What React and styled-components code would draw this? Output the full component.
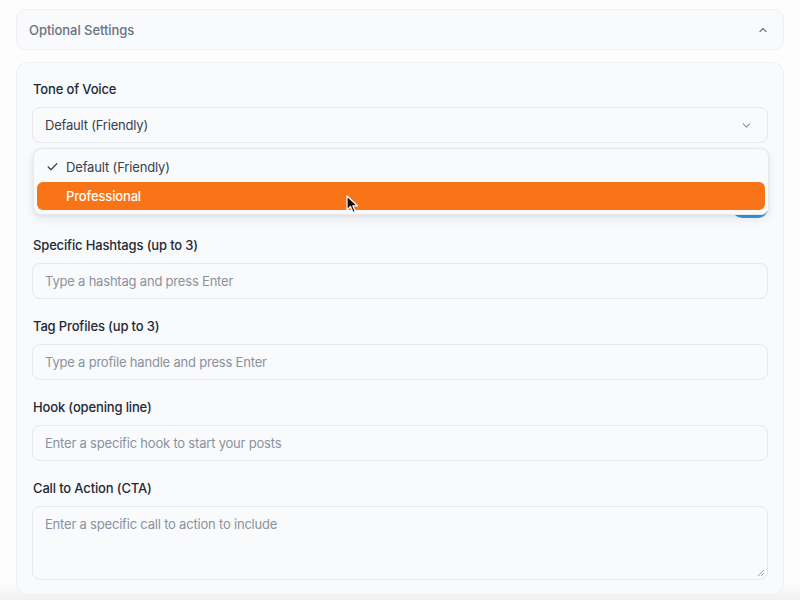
import React from "react";
import styled, { createGlobalStyle } from "styled-components";

const Global = createGlobalStyle`
  html, body { margin: 0; padding: 0; background: #fdfdfd; }
  body { font-family: Inter, "Noto Sans", sans-serif; -webkit-font-smoothing: antialiased; }
  * { box-sizing: border-box; }
`;

const Page = styled.div`
  width: 800px;
  height: 600px;
  padding: 9px 16px 0;
  display: flex;
  flex-direction: column;
  gap: 12px;
  overflow: hidden;
  position: relative;
  background: linear-gradient(to bottom, #fdfdfd 0%, #fdfdfd 97%, #f1f1f2 100%);
`;

const Header = styled.div`
  height: 41px;
  border: 1px solid #eef0f3;
  border-radius: 10px;
  background: #f8fafc;
  display: flex;
  align-items: center;
  justify-content: space-between;
  padding: 0 14px 0 12px;
  font-size: 13px;
  font-weight: 500;
  color: #6b7280;
  letter-spacing: -0.05px;
`;

const Card = styled.div`
  border: 1px solid #eceff3;
  border-radius: 12px;
  background: #f8fafc;
  padding: 16px 15px 14px;
  display: flex;
  flex-direction: column;
  gap: 17px;
`;

const Field = styled.div`
  display: flex;
  flex-direction: column;
  gap: 8px;
  position: relative;
`;

const Label = styled.div`
  font-size: 13px;
  line-height: 20px;
  font-weight: 500;
  color: #1f2937;
  padding-left: 1px;
  letter-spacing: -0.15px;
`;

const Box = styled.div`
  height: ${(p) => (p.$tall ? "74px" : "36px")};
  border: 1px solid #e5e8ed;
  border-radius: 8px;
  background: #f8fafc;
  display: flex;
  align-items: ${(p) => (p.$tall ? "flex-start" : "center")};
  justify-content: space-between;
  padding: ${(p) => (p.$tall ? "9px 12px" : "0 14px 0 12px")};
  font-size: 13px;
  letter-spacing: -0.2px;
  color: ${(p) => (p.$placeholder ? "#8b929c" : "#374151")};
  position: relative;
`;

const Resize = styled.svg`
  position: absolute;
  right: 2px;
  bottom: 2px;
`;

const HiddenRow = styled.div`
  height: 58px;
  display: flex;
  align-items: flex-end;
  justify-content: flex-end;
`;

const Toggle = styled.div`
  width: 36px;
  height: 20px;
  border-radius: 10px;
  background: #3b95e0;
`;

const Menu = styled.div`
  position: absolute;
  top: 69px;
  left: 1px;
  right: -1px;
  height: 67px;
  background: #f9fafb;
  border: 1px solid #e6e8ec;
  border-radius: 8px;
  box-shadow: 0 4px 10px rgba(15, 23, 42, 0.08), 0 1px 3px rgba(15, 23, 42, 0.06);
  padding: 4px 3px;
  display: flex;
  flex-direction: column;
  gap: 1px;
  z-index: 5;
`;

const Item = styled.div`
  height: 29px;
  border-radius: 6px;
  display: flex;
  align-items: center;
  padding-left: 29px;
  position: relative;
  font-size: 13px;
  letter-spacing: -0.15px;
  font-weight: ${(p) => (p.$active ? 500 : 400)};
  color: ${(p) => (p.$active ? "#ffffff" : "#374151")};
  background: ${(p) => (p.$active ? "#f97419" : "transparent")};
`;

const Check = styled.svg`
  position: absolute;
  left: 9px;
  top: 50%;
  transform: translateY(-50%);
`;

const Cursor = styled.svg`
  position: absolute;
  left: 346px;
  top: 195px;
  z-index: 10;
`;

const ChevronUp = () => (
  <svg width="12" height="12" viewBox="0 0 24 24" fill="none" stroke="#6b7280" strokeWidth="2.2" strokeLinecap="round" strokeLinejoin="round">
    <path d="M18 15l-6-6-6 6" />
  </svg>
);

const ChevronDown = () => (
  <svg width="13" height="13" viewBox="0 0 24 24" fill="none" stroke="#8b929c" strokeWidth="2" strokeLinecap="round" strokeLinejoin="round">
    <path d="M6 9l6 6 6-6" />
  </svg>
);

export default function App() {
  return (
    <>
      <Global />
      <Page>
        <Header>
          <span>Optional Settings</span>
          <ChevronUp />
        </Header>
        <Card>
          <Field>
            <Label>Tone of Voice</Label>
            <Box>
              <span>Default (Friendly)</span>
              <ChevronDown />
            </Box>
            <Menu>
              <Item>
                <Check width="13" height="13" viewBox="0 0 24 24" fill="none" stroke="#374151" strokeWidth="2.2" strokeLinecap="round" strokeLinejoin="round">
                  <path d="M20 6L9 17l-5-5" />
                </Check>
                Default (Friendly)
              </Item>
              <Item $active>Professional</Item>
            </Menu>
          </Field>
          <HiddenRow>
            <Toggle />
          </HiddenRow>
          <Field>
            <Label>Specific Hashtags (up to 3)</Label>
            <Box $placeholder>Type a hashtag and press Enter</Box>
          </Field>
          <Field>
            <Label>Tag Profiles (up to 3)</Label>
            <Box $placeholder>Type a profile handle and press Enter</Box>
          </Field>
          <Field>
            <Label>Hook (opening line)</Label>
            <Box $placeholder>Enter a specific hook to start your posts</Box>
          </Field>
          <Field>
            <Label>Call to Action (CTA)</Label>
            <Box $tall $placeholder>
              Enter a specific call to action to include
              <Resize width="9" height="9" viewBox="0 0 9 9">
                <path d="M8 2L2 8M8 5L5 8" stroke="#9aa0a8" strokeWidth="1" />
              </Resize>
            </Box>
          </Field>
        </Card>
        <Cursor width="14" height="20" viewBox="0 0 14 20">
          <path d="M1 1 L1 15 L4.5 11.5 L7 17.5 L9.3 16.5 L6.8 10.8 L11.5 10.8 Z" fill="#111" stroke="#fff" strokeWidth="1.2" strokeLinejoin="round" />
        </Cursor>
      </Page>
    </>
  );
}
